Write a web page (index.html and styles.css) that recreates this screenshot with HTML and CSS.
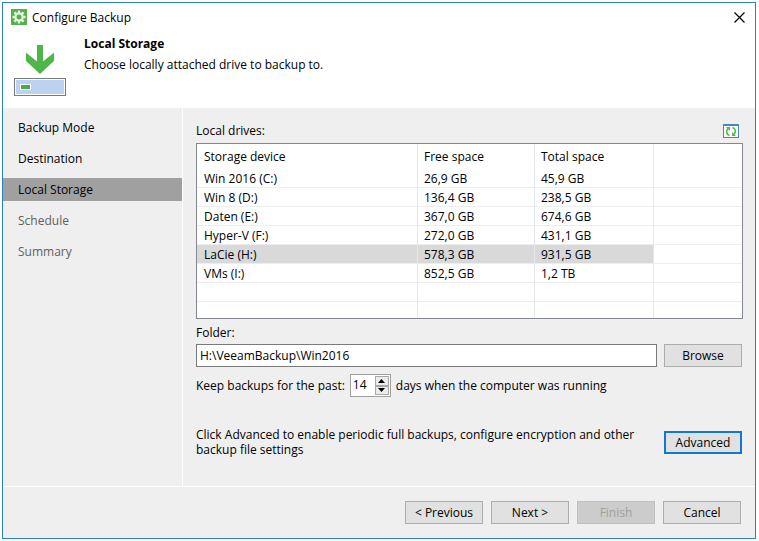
FILE: index.html
```html
<!DOCTYPE html>
<html lang="en">

<head>
	<meta charset="UTF-8">
	<meta name="viewport" content="width=device-width, initial-scale=1.0">
	<title>Configure Backup</title>
	<link rel="stylesheet" href="styles.css">
</head>

<body>
	<div class="window">
		<header class="header">
			<div class="titlebar">
				<svg class="app-icon" width="16" height="16" viewBox="0 0 16 16">
					<rect width="16" height="16" fill="#54b04a"/>
					<g stroke="#e6f5e4" stroke-width="2.4">
						<path d="M8 1.5v13M1.5 8h13M3.4 3.4l9.2 9.2M12.6 3.4l-9.2 9.2"/>
					</g>
					<circle cx="8" cy="8" r="4.7" fill="#e6f5e4"/>
					<circle cx="8" cy="8" r="2.5" fill="#54b04a"/>
				</svg>
				<span class="title">Configure Backup</span>
				<button class="close" type="button" aria-label="Close">
					<svg width="11" height="11" viewBox="0 0 11 11">
						<path d="M.5 .5l10 10M10.5 .5l-10 10" stroke="#000" stroke-width="1.2"/>
					</svg>
				</button>
			</div>
			<div class="step-info">
				<svg class="step-icon" width="52" height="52" viewBox="0 0 52 52">
					<path d="M23 0h6v16.500l11-9V16L26 29 12 16V7.500l11 9z" fill="#4fb748"/>
					<rect x=".5" y="33.500" width="51" height="17" fill="#fff" stroke="#777b85"/>
					<rect x="2" y="35" width="48" height="14" fill="#bbd3ee"/>
					<rect x="6" y="39" width="11" height="6" fill="#fff"/>
					<rect x="7" y="40" width="9" height="4" fill="#4aaa48"/>
				</svg>
				<div>
					<h1>Local Storage</h1>
					<p>Choose locally attached drive to backup to.</p>
				</div>
			</div>
		</header>

		<div class="body">
			<nav class="steps">
				<a href="#mode">Backup Mode</a>
				<a href="#destination">Destination</a>
				<a href="#storage" class="active">Local Storage</a>
				<a href="#schedule" class="pending">Schedule</a>
				<a href="#summary" class="pending">Summary</a>
			</nav>

			<main class="content">
				<div class="drives-head">
					<span id="drives-label">Local drives:</span>
					<button class="refresh" type="button" aria-label="Refresh">
						<svg width="16" height="14" viewBox="0 0 16 14">
							<rect x=".5" y=".5" width="15" height="13" fill="#fff" stroke="#4a87b8"/>
							<path d="M0 1h16" stroke="#4a87b8" stroke-width="2"/>
							<path d="M6.500 11.500C3 10.500 3 6.500 5 4.500M9.500 3.500c3.500 1 3.500 5 1.500 7" fill="none" stroke="#55b84c" stroke-width="1.600"/>
							<path d="M3 3h4v4zM13 12H9V8z" fill="#55b84c"/>
						</svg>
					</button>
				</div>

				<div class="drives">
					<table aria-labelledby="drives-label">
						<colgroup>
							<col class="col-device">
							<col class="col-free">
							<col class="col-total">
							<col>
						</colgroup>
						<thead>
							<tr><th>Storage device</th><th>Free space</th><th>Total space</th><th></th></tr>
						</thead>
						<tbody>
							<tr><td>Win 2016 (C:)</td><td>26,9 GB</td><td>45,9 GB</td><td></td></tr>
							<tr><td>Win 8 (D:)</td><td>136,4 GB</td><td>238,5 GB</td><td></td></tr>
							<tr><td>Daten (E:)</td><td>367,0 GB</td><td>674,6 GB</td><td></td></tr>
							<tr><td>Hyper-V (F:)</td><td>272,0 GB</td><td>431,1 GB</td><td></td></tr>
							<tr class="selected"><td>LaCie (H:)</td><td>578,3 GB</td><td>931,5 GB</td><td></td></tr>
							<tr><td>VMs (I:)</td><td>852,5 GB</td><td>1,2 TB</td><td></td></tr>
							<tr><td></td><td></td><td></td><td></td></tr>
							<tr class="last"><td></td><td></td><td></td><td></td></tr>
						</tbody>
					</table>
				</div>

				<label class="folder-label" for="folder">Folder:</label>
				<div class="row">
					<input id="folder" class="folder" type="text" value="H:\VeeamBackup\Win2016">
					<button class="btn" type="button">Browse</button>
				</div>

				<div class="keep">
					<label for="days">Keep backups for the past:</label>
					<div class="spinner">
						<input id="days" type="text" inputmode="numeric" value="14">
						<div class="arrows">
							<button type="button" aria-label="More days">
								<svg width="7" height="4" viewBox="0 0 7 4"><path d="M0 4l3.500-4L7 4z"/></svg>
							</button>
							<button type="button" aria-label="Fewer days">
								<svg width="7" height="4" viewBox="0 0 7 4"><path d="M0 0h7L3.500 4z"/></svg>
							</button>
						</div>
					</div>
					<span>days when the computer was running</span>
				</div>

				<div class="row advanced">
					<p>Click Advanced to enable periodic full backups, configure encryption and other backup file settings</p>
					<button class="btn default" type="button">Advanced</button>
				</div>
			</main>
		</div>

		<footer class="footer">
			<button class="btn" type="button">&lt; Previous</button>
			<button class="btn" type="button">Next &gt;</button>
			<button class="btn" type="button" disabled>Finish</button>
			<button class="btn" type="button">Cancel</button>
		</footer>
	</div>
</body>

</html>
```
FILE: styles.css
```css
* {
	box-sizing: border-box;
}

body {
	margin: 0;
	padding: 2px 3px 2px 2px;
	min-height: 100vh;
	display: flex;
	background-color: #fff;
	color: #000;
	font: 12px/15px "Open Sans", "Segoe UI", sans-serif;
}

button,
input {
	font: inherit;
	color: inherit;
}

button {
	padding: 0;
}

svg {
	display: block;
}

h1,
p {
	margin: 0;
}

.window {
	flex: 1;
	display: flex;
	flex-direction: column;
	border: 1px solid #2a7fbf;
	background-color: #efefef;
}

.header {
	background-color: #fff;
	padding-bottom: 11px;
}

.titlebar {
	display: flex;
	align-items: center;
	gap: 5px;
	height: 28px;
	padding: 0 10px 0 8px;
}

.title {
	flex: 1;
}

.close,
.refresh {
	border: none;
	background: none;
}

.step-info {
	display: flex;
	gap: 18px;
	padding: 5px 11px 0;
}

.step-icon {
	margin-top: 9px;
	flex: none;
}

.step-info h1 {
	font-size: 12px;
	line-height: 15px;
	margin-bottom: 6px;
}

.body {
	flex: 1;
	display: flex;
}

.steps {
	width: 180px;
	flex: none;
	display: flex;
	flex-direction: column;
	gap: 8px;
	padding-top: 8px;
	border-right: 1px solid #fff;
}

.steps a {
	padding: 4px 15px;
	color: #000;
	text-decoration: none;
}

.steps .active {
	background-color: #a0a0a0;
}

.steps .pending {
	color: #606060;
}

.content {
	flex: 1;
	display: flex;
	flex-direction: column;
	padding: 15px 12px 24px 13px;
}

.drives-head {
	display: flex;
	justify-content: space-between;
	padding-right: 4px;
	margin-bottom: 5px;
}

.drives {
	border: 1px solid #828790;
	background-color: #fff;
}

table {
	width: 100%;
	table-layout: fixed;
	border-collapse: separate;
	border-spacing: 0;
}

.col-device {
	width: 221px;
}

.col-free {
	width: 117px;
}

.col-total {
	width: 119px;
}

th,
td {
	padding: 0 6px;
	text-align: left;
	font-weight: normal;
	border-right: 1px solid #e3e8ef;
}

th:first-child,
td:first-child {
	padding-left: 7px;
}

th:last-child,
td:last-child {
	border-right: none;
}

th {
	height: 25px;
}

td {
	height: 19px;
	border-bottom: 1px solid #ededf0;
}

.selected td:not(:last-child) {
	background-color: #d9d9d9;
}

.last td {
	height: 16px;
	border-bottom: none;
}

.folder-label {
	margin: 6px 0 4px;
}

.row {
	display: flex;
	gap: 7px;
	padding-right: 1px;
}

.folder {
	flex: 1;
	min-width: 0;
	height: 23px;
	padding: 0 3px;
	border: 1px solid #7a7a7a;
	background-color: #fff;
}

.btn {
	width: 78px;
	height: 23px;
	flex: none;
	border: 1px solid #adadad;
	background-color: #e1e1e1;
}

.btn.default {
	border: 2px solid #0f78d0;
}

.btn:disabled {
	border-color: #bfbfbf;
	background-color: #cccccc;
	color: #a0a0a0;
}

.keep {
	display: flex;
	align-items: center;
	gap: 5px;
	margin-top: 7px;
}

.spinner {
	display: flex;
	width: 41px;
	height: 23px;
	padding: 1px;
	border: 1px solid #a0a0a0;
	background-color: #fff;
}

.spinner input {
	width: 23px;
	padding: 0 0 2px 1px;
	border: none;
	background: none;
}

.arrows {
	flex: 1;
	display: flex;
	flex-direction: column;
}

.arrows button {
	flex: 1;
	display: flex;
	align-items: center;
	justify-content: center;
	border: 1px solid #a8a8a8;
	background-color: #ececec;
}

.advanced {
	margin-top: 30px;
	align-items: center;
}

.advanced p {
	flex: 1;
	padding-right: 20px;
}

.footer {
	display: flex;
	justify-content: flex-end;
	gap: 8px;
	padding: 14px;
	border-top: 1px solid #fff;
}
```
